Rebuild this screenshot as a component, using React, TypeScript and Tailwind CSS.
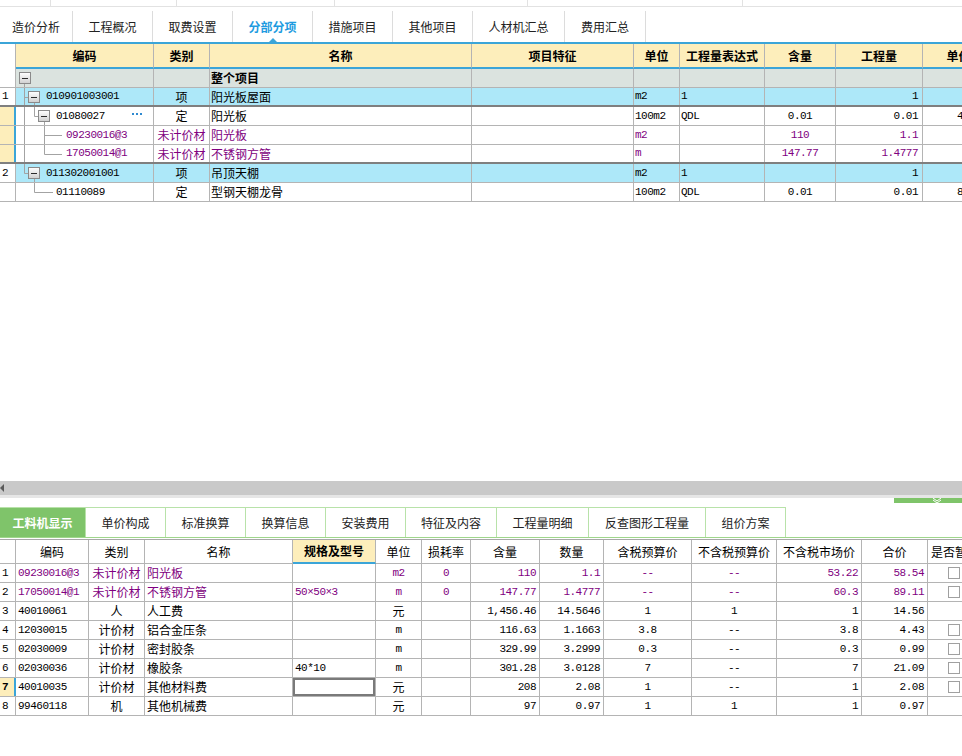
import React from 'react';

const M = "font-[family-name:'Liberation_Mono','Noto_Sans_CJK_SC',monospace] text-[11px] tracking-[-0.5px]";
const LINE = '#a3a3a3';

const topW = ['w-[16px]', 'w-[138px]', 'w-[56px]', 'w-[262px]', 'w-[162px]', 'w-[46px]', 'w-[85px]', 'w-[71px]', 'w-[87px]', 'w-[72px]'];
const botW = ['w-[16px]', 'w-[73px]', 'w-[56px]', 'w-[148px]', 'w-[83px]', 'w-[46px]', 'w-[49px]', 'w-[69px]', 'w-[64px]', 'w-[88px]', 'w-[85px]', 'w-[85px]', 'w-[66px]', 'w-[80px]'];

function Cell({ w, className = '', children }: { w: string; className?: string; children?: React.ReactNode }) {
  return (
    <div className={`${w} shrink-0 h-full border-r border-[#b4b4b4] flex items-center overflow-hidden whitespace-nowrap ${className}`}>
      {children}
    </div>
  );
}

// tree pieces
function Box({ x, id }: { x: number; id: string }) {
  return (
    <g>
      <defs>
        <linearGradient id={id} x1="0" y1="0" x2="0" y2="1">
          <stop offset="0" stopColor="#ffffff" />
          <stop offset="1" stopColor="#cfcfcf" />
        </linearGradient>
      </defs>
      <rect x={x + 0.5} y={3.5} width={11} height={11} fill={`url(#${id})`} stroke="#8a8a8a" />
      <line x1={x + 3} x2={x + 9} y1={9.5} y2={9.5} stroke="#2b2b2b" />
    </g>
  );
}
const V = ({ x, y1, y2 }: { x: number; y1: number; y2: number }) => <line x1={x + 0.5} x2={x + 0.5} y1={y1} y2={y2} stroke={LINE} />;
const H = ({ x1, x2 }: { x1: number; x2: number }) => <line x1={x1} x2={x2} y1={9.5} y2={9.5} stroke={LINE} />;

function Tree({ kind }: { kind: number }) {
  const widths = [16, 30, 40, 50, 50, 30, 40];
  const w = widths[kind];
  return (
    <svg width={w} height={18} className="shrink-0">
      {kind === 0 && (<><Box x={3} id="tb0" /><V x={8} y1={15} y2={18} /></>)}
      {kind === 1 && (<><V x={8} y1={0} y2={18} /><H x1={8.5} x2={12.5} /><Box x={12} id="tb1" /><V x={18} y1={15} y2={18} /></>)}
      {kind === 2 && (<><V x={8} y1={0} y2={18} /><V x={18} y1={0} y2={9.5} /><H x1={18.5} x2={22.5} /><Box x={22} id="tb2" /><V x={28} y1={15} y2={18} /></>)}
      {kind === 3 && (<><V x={8} y1={0} y2={18} /><V x={28} y1={0} y2={18} /><H x1={28.5} x2={46} /></>)}
      {kind === 4 && (<><V x={8} y1={0} y2={18} /><V x={28} y1={0} y2={9.5} /><H x1={28.5} x2={46} /></>)}
      {kind === 5 && (<><V x={8} y1={0} y2={9.5} /><H x1={8.5} x2={12.5} /><Box x={12} id="tb5" /><V x={18} y1={15} y2={18} /></>)}
      {kind === 6 && (<><V x={18} y1={0} y2={9.5} /><H x1={18.5} x2={37} /></>)}
    </svg>
  );
}

type TopRow = {
  num?: string; sel?: boolean; code?: string; dots?: boolean; type?: string; name?: string; bold?: boolean;
  unit?: string; expr?: string; content?: string; qty?: string; price?: string; bg: string; thick?: boolean; purple?: boolean;
};

const topRows: TopRow[] = [
  { name: '整个项目', bold: true, bg: 'bg-[#dbe3df]' },
  { num: '1', code: '010901003001', type: '项', name: '阳光板屋面', unit: 'm2', expr: '1', qty: '1', bg: 'bg-[#ade8f9]', thick: true },
  { sel: true, code: '01080027', dots: true, type: '定', name: '阳光板', unit: '100m2', expr: 'QDL', content: '0.01', qty: '0.01', price: '4061.27', bg: 'bg-white' },
  { sel: true, code: '09230016@3', type: '未计价材', name: '阳光板', unit: 'm2', content: '110', qty: '1.1', bg: 'bg-white', purple: true },
  { sel: true, code: '17050014@1', type: '未计价材', name: '不锈钢方管', unit: 'm', content: '147.77', qty: '1.4777', bg: 'bg-white', purple: true, thick: true },
  { num: '2', code: '011302001001', type: '项', name: '吊顶天棚', unit: 'm2', expr: '1', qty: '1', bg: 'bg-[#ade8f9]' },
  { code: '01110089', type: '定', name: '型钢天棚龙骨', unit: '100m2', expr: 'QDL', content: '0.01', qty: '0.01', price: '8523.40', bg: 'bg-white' },
];

type BotRow = {
  code: string; type: string; name: string; spec?: string; unit: string; loss?: string; content: string; qty: string;
  tax: string; notax: string; market: string; total: string; check: boolean; purple?: boolean; sel?: boolean;
};

const botRows: BotRow[] = [
  { code: '09230016@3', type: '未计价材', name: '阳光板', unit: 'm2', loss: '0', content: '110', qty: '1.1', tax: '--', notax: '--', market: '53.22', total: '58.54', check: true, purple: true },
  { code: '17050014@1', type: '未计价材', name: '不锈钢方管', spec: '50×50×3', unit: 'm', loss: '0', content: '147.77', qty: '1.4777', tax: '--', notax: '--', market: '60.3', total: '89.11', check: true, purple: true },
  { code: '40010061', type: '人', name: '人工费', unit: '元', content: '1,456.46', qty: '14.5646', tax: '1', notax: '1', market: '1', total: '14.56', check: false },
  { code: '12030015', type: '计价材', name: '铝合金压条', unit: 'm', content: '116.63', qty: '1.1663', tax: '3.8', notax: '--', market: '3.8', total: '4.43', check: true },
  { code: '02030009', type: '计价材', name: '密封胶条', unit: 'm', content: '329.99', qty: '3.2999', tax: '0.3', notax: '--', market: '0.3', total: '0.99', check: true },
  { code: '02030036', type: '计价材', name: '橡胶条', spec: '40*10', unit: 'm', content: '301.28', qty: '3.0128', tax: '7', notax: '--', market: '7', total: '21.09', check: true },
  { code: '40010035', type: '计价材', name: '其他材料费', unit: '元', content: '208', qty: '2.08', tax: '1', notax: '--', market: '1', total: '2.08', check: true, sel: true },
  { code: '99460118', type: '机', name: '其他机械费', unit: '元', content: '97', qty: '0.97', tax: '1', notax: '1', market: '1', total: '0.97', check: false },
];

const topTabs = [
  { t: '造价分析', w: 'w-[73px]' },
  { t: '工程概况', w: 'w-[80px]' },
  { t: '取费设置', w: 'w-[80px]' },
  { t: '分部分项', w: 'w-[80px]', active: true },
  { t: '措施项目', w: 'w-[80px]' },
  { t: '其他项目', w: 'w-[80px]' },
  { t: '人材机汇总', w: 'w-[92px]' },
  { t: '费用汇总', w: 'w-[81px]' },
];

const botTabs = [
  { t: '工料机显示', w: 'w-[86px]', active: true },
  { t: '单价构成', w: 'w-[80px]' },
  { t: '标准换算', w: 'w-[80px]' },
  { t: '换算信息', w: 'w-[80px]' },
  { t: '安装费用', w: 'w-[80px]' },
  { t: '特征及内容', w: 'w-[91px]' },
  { t: '工程量明细', w: 'w-[92px]' },
  { t: '反查图形工程量', w: 'w-[117px]' },
  { t: '组价方案', w: 'w-[80px]' },
];

export default function App() {
  return (
    <div className="w-[962px] h-[756px] overflow-hidden bg-white flex flex-col text-[12px] text-black font-[family-name:'Noto_Sans_CJK_SC',sans-serif]">
      {/* remains of the bar above */}
      <div className="flex h-[7px] shrink-0 border-b border-[#e2e2e2]">
        <div className="w-[51px] border-r border-[#e2e2e2]" />
        <div className="w-[126px] border-r border-[#e2e2e2]" />
        <div className="w-[158px] border-r border-[#e2e2e2]" />
        <div className="w-[193px] border-r border-[#e2e2e2]" />
        <div className="w-[215px] border-r border-[#e2e2e2]" />
      </div>
      <div className="h-[4px] shrink-0" />

      {/* top tabs */}
      <div className="flex h-[33px] shrink-0 border-b-2 border-[#3ba5d8]">
        {topTabs.map((tab) => (
          <div
            key={tab.t}
            className={`${tab.w} relative h-full border-r border-[#dcdcdc] flex items-center justify-center ${tab.active ? 'text-[#1e9be0] font-bold' : 'text-[#222]'}`}
          >
            {tab.t}
            {tab.active && (
              <div className="absolute bottom-0 left-1/2 -translate-x-1/2 w-0 h-0 border-l-[4px] border-r-[4px] border-b-[4px] border-l-transparent border-r-transparent border-b-[#3ba5d8]" />
            )}
          </div>
        ))}
      </div>

      {/* top grid */}
      <div className="flex-1 flex flex-col">
        <div className="flex h-[25px] shrink-0">
          {['', '编码', '类别', '名称', '项目特征', '单位', '工程量表达式', '含量', '工程量', '单价'].map((h, i) => (
            <Cell
              key={i}
              w={topW[i]}
              className={`font-bold justify-center ${i === 0 ? 'bg-white' : 'bg-[#fdeebb] border-b-2 border-b-[#3ba5d8]'}`}
            >
              {h}
            </Cell>
          ))}
        </div>
        {topRows.map((r, i) => {
          const col = r.purple ? 'text-[#800080]' : 'text-black';
          return (
            <div key={i} className={`flex h-[19px] shrink-0 ${r.thick ? 'border-b-2 border-[#7f7f7f]' : 'border-b border-[#b4b4b4]'}`}>
              <Cell w={topW[0]} className={`${M} pl-[2px] ${r.sel ? 'bg-[#fdeebb] border-r-2 border-r-[#3ba5d8]' : 'bg-white'}`}>{r.num}</Cell>
              <Cell w={topW[1]} className={`${r.bg} ${col} relative`}>
                <Tree kind={i} />
                <span className={M}>{r.code}</span>
                {r.dots && (
                  <svg width="11" height="3" className="absolute right-[10px] top-[6px]">
                    <rect x="0" y="0" width="2" height="2" fill="#2f8ad0" />
                    <rect x="4" y="0" width="2" height="2" fill="#2f8ad0" />
                    <rect x="8" y="0" width="2" height="2" fill="#2f8ad0" />
                  </svg>
                )}
              </Cell>
              <Cell w={topW[2]} className={`${r.bg} ${col} justify-center`}>{r.type}</Cell>
              <Cell w={topW[3]} className={`${r.bg} ${col} pl-[1px] ${r.bold ? 'font-bold' : ''}`}>{r.name}</Cell>
              <Cell w={topW[4]} className={r.bg} />
              <Cell w={topW[5]} className={`${r.bg} ${col} ${M} pl-[1px]`}>{r.unit}</Cell>
              <Cell w={topW[6]} className={`${r.bg} ${col} ${M} pl-[1px]`}>{r.expr}</Cell>
              <Cell w={topW[7]} className={`${r.bg} ${col} ${M} justify-center`}>{r.content}</Cell>
              <Cell w={topW[8]} className={`${r.bg} ${col} ${M} justify-end pr-[4px]`}>{r.qty}</Cell>
              <Cell w={topW[9]} className={`${r.bg} ${col} ${M} pl-[34px]`}>{r.price}</Cell>
            </div>
          );
        })}
      </div>

      {/* horizontal scrollbar */}
      <div className="h-[14px] shrink-0 bg-[#c9c9c9] flex items-center">
        <svg width="4" height="14" className="shrink-0">
          <polygon points="0,7 4,3 4,11" fill="#5a5a5a" />
        </svg>
      </div>
      <div className="h-[3px] shrink-0 bg-[#e6e6e6]" />
      <div className="h-[5px] shrink-0 flex justify-end">
        <div className="w-[68px] h-full bg-[#7fc46a] flex justify-center">
          <svg width="10" height="5" className="ml-[18px]">
            <polyline points="1,0 5,3 9,0" fill="none" stroke="#ffffff" strokeWidth="1" />
            <polyline points="1,2 5,5 9,2" fill="none" stroke="#ffffff" strokeWidth="1" />
          </svg>
        </div>
      </div>
      <div className="h-[4px] shrink-0" />

      {/* bottom tabs */}
      <div className="flex h-[30px] shrink-0">
        {botTabs.map((tab) => (
          <div
            key={tab.t}
            className={`${tab.w} h-full flex items-center justify-center border-t border-r border-[#b8e2a9] ${tab.active ? 'bg-[#7fc46a] text-white font-bold border-[#7fc46a]' : 'text-[#222] bg-white'}`}
          >
            {tab.t}
          </div>
        ))}
      </div>
      <div className="h-px shrink-0 bg-[#9fd68c]" />
      <div className="h-px shrink-0 bg-white" />

      {/* bottom grid */}
      <div className="flex h-[25px] shrink-0 border-t border-[#a8a8a8]">
        {['', '编码', '类别', '名称', '规格及型号', '单位', '损耗率', '含量', '数量', '含税预算价', '不含税预算价', '不含税市场价', '合价', '是否暂估'].map((h, i) => (
          <Cell
            key={i}
            w={botW[i]}
            className={`justify-center ${i === 4 ? 'bg-[#fdeebb] font-bold border-b-2 border-b-[#3ba5d8]' : 'bg-white border-b border-b-[#b4b4b4]'} ${i === 13 ? 'justify-start pl-[3px]' : ''}`}
          >
            {h}
          </Cell>
        ))}
      </div>
      {botRows.map((r, i) => {
        const col = r.purple ? 'text-[#800080]' : 'text-black';
        return (
          <div key={i} className="flex h-[19px] shrink-0 border-b border-[#b4b4b4]">
            <Cell w={botW[0]} className={`${M} pl-[2px] ${r.sel ? 'bg-[#fdeebb] font-bold border-r-2 border-r-[#3ba5d8]' : 'bg-white'}`}>{i + 1}</Cell>
            <Cell w={botW[1]} className={`${M} ${col} pl-[2px]`}>{r.code}</Cell>
            <Cell w={botW[2]} className={`${col} justify-center`}>{r.type}</Cell>
            <Cell w={botW[3]} className={`${col} pl-[2px]`}>{r.name}</Cell>
            <Cell w={botW[4]} className={`${M} ${col} ${r.sel ? '' : 'pl-[2px]'}`}>
              {r.sel ? <div className="w-full h-full border-2 border-[#7a7a7a]" /> : r.spec}
            </Cell>
            <Cell w={botW[5]} className={`${r.unit === '元' ? '' : M} ${col} justify-center`}>{r.unit}</Cell>
            <Cell w={botW[6]} className={`${M} ${col} justify-center`}>{r.loss}</Cell>
            <Cell w={botW[7]} className={`${M} ${col} justify-end pr-[3px]`}>{r.content}</Cell>
            <Cell w={botW[8]} className={`${M} ${col} justify-end pr-[3px]`}>{r.qty}</Cell>
            <Cell w={botW[9]} className={`${M} ${col} justify-center`}>{r.tax}</Cell>
            <Cell w={botW[10]} className={`${M} ${col} justify-center`}>{r.notax}</Cell>
            <Cell w={botW[11]} className={`${M} ${col} justify-end pr-[3px]`}>{r.market}</Cell>
            <Cell w={botW[12]} className={`${M} ${col} justify-end pr-[3px]`}>{r.total}</Cell>
            <Cell w={botW[13]}>
              {r.check && <div className="ml-[20px] w-[12px] h-[12px] border border-[#a0a0a0] bg-white" />}
            </Cell>
          </div>
        );
      })}
      <div className="h-[40px] shrink-0" />
    </div>
  );
}
